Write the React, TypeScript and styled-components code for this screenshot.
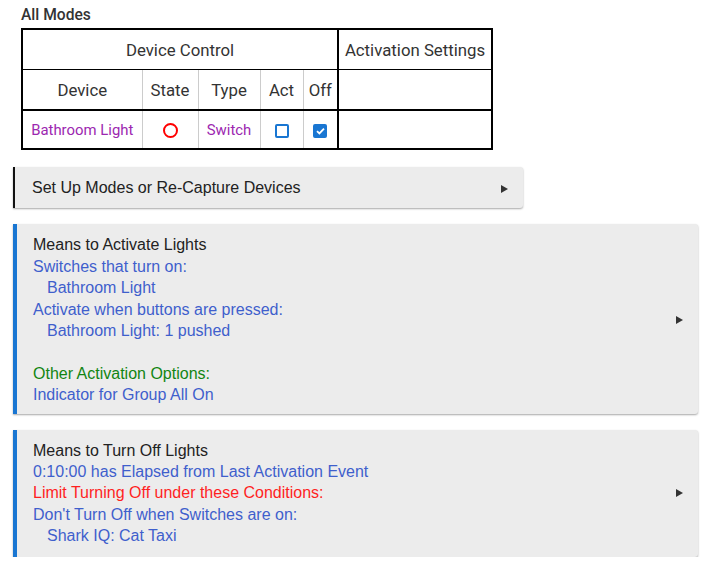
import styled, { createGlobalStyle } from "styled-components";

const GlobalStyle = createGlobalStyle`
    body {
        margin: 0;
        background: #ffffff;
        font-family: "Liberation Sans", Arial, sans-serif;
    }
`

const Page = styled.div`
    padding: 5px 16px 0 13px;
    display: flex;
    flex-direction: column;
`
const Heading = styled.div`
    font-family: Roboto, sans-serif;
    font-size: 15.6px;
    font-weight: 500;
    color: #333;
    margin-left: 8px;
    line-height: 21px;
    margin-bottom: 2px;
`
const Table = styled.table`
    border-collapse: collapse;
    table-layout: fixed;
    margin-left: 8px;
    font-family: Roboto, sans-serif;
    border: 2px solid #000;
    width: 472px;
`
const Th = styled.th<{ $last?: boolean; $group?: boolean }>`
    font-weight: 400;
    font-size: 16.8px;
    color: #333;
    height: 39px;
    padding: 0;
    white-space: nowrap;
    border-right: ${p => (p.$last ? "2px solid #000" : "1px solid #ccc")};
    border-bottom: ${p => (p.$group ? "1px solid #000" : "2px solid #000")};
`
const Td = styled.td<{ $last?: boolean; $purple?: boolean }>`
    font-size: 14.9px;
    color: ${p => (p.$purple ? "#9c27b0" : "#333")};
    text-align: center;
    white-space: nowrap;
    height: 37px;
    padding: 0;
    border-right: ${p => (p.$last ? "2px solid #000" : "1px solid #ccc")};
`
const StateRing = styled.span`
    display: inline-block;
    width: 11px;
    height: 11px;
    border: 2px solid #f00;
    border-radius: 50%;
    vertical-align: middle;
`
const Box = styled.span<{ $checked?: boolean }>`
    display: inline-flex;
    align-items: center;
    justify-content: center;
    box-sizing: border-box;
    width: 14px;
    height: 14px;
    border: 2px solid #1976d2;
    border-radius: 2px;
    background: ${p => (p.$checked ? "#1976d2" : "transparent")};
    vertical-align: middle;
`
const Card = styled.div<{ $accent: string; $width: number; $gap: number; $tail?: number }>`
    width: ${p => p.$width}px;
    box-sizing: border-box;
    background: #ececec;
    border-left: ${p => p.$accent};
    border-radius: 0 3px 3px 0;
    box-shadow: 0 1px 2px rgba(0, 0, 0, 0.35);
    display: flex;
    align-items: center;
    padding: 10px 15px ${p => p.$tail ?? 8}px 16px;
    margin-top: ${p => p.$gap}px;
    font-size: 16px;
    line-height: 21.4px;
`
const CardBody = styled.div`
    flex: 1;
    display: flex;
    flex-direction: column;
`
const Line = styled.div<{ $tone?: "title" | "blue" | "green" | "red"; $indent?: boolean }>`
    min-height: 21.4px;
    padding-left: ${p => (p.$indent ? "14px" : "0")};
    color: ${p =>
        p.$tone === "blue" ? "#3f5fcc" :
        p.$tone === "green" ? "#128512" :
        p.$tone === "red" ? "#ff1f1f" : "#222"};
`
const MenuLine = styled(Line)`
    padding-left: 1px;
    padding-bottom: 2px;
`
const Arrow = styled.span`
    width: 0;
    height: 0;
    border-top: 4px solid transparent;
    border-bottom: 4px solid transparent;
    border-left: 7px solid #333;
`

const Check = () => (
    <svg width="9" height="8" viewBox="0 0 9 8">
        <path d="M1 4.2 L3.4 6.4 L8 1.6" stroke="#fff" strokeWidth="1.8" fill="none" />
    </svg>
)

const App = () => {
    return (
        <>
        <GlobalStyle />
        <Page>
            <Heading>All Modes</Heading>
            <Table>
                <colgroup>
                    <col style={{ width: 120 }} />
                    <col style={{ width: 56 }} />
                    <col style={{ width: 62 }} />
                    <col style={{ width: 43 }} />
                    <col style={{ width: 35 }} />
                    <col />
                </colgroup>
                <thead>
                    <tr>
                        <Th colSpan={5} $group $last>Device Control</Th>
                        <Th $group>Activation Settings</Th>
                    </tr>
                    <tr>
                        <Th>Device</Th>
                        <Th>State</Th>
                        <Th>Type</Th>
                        <Th>Act</Th>
                        <Th $last>Off</Th>
                        <Th></Th>
                    </tr>
                </thead>
                <tbody>
                    <tr>
                        <Td $purple>Bathroom Light</Td>
                        <Td><StateRing /></Td>
                        <Td $purple>Switch</Td>
                        <Td><Box /></Td>
                        <Td $last><Box $checked><Check /></Box></Td>
                        <Td></Td>
                    </tr>
                </tbody>
            </Table>

            <Card $accent="2px solid #111" $width={510} $gap={17}>
                <CardBody>
                    <MenuLine>Set Up Modes or Re-Capture Devices</MenuLine>
                </CardBody>
                <Arrow />
            </Card>

            <Card $accent="4px solid #1976d2" $width={685} $gap={16}>
                <CardBody>
                    <Line $tone="title">Means to Activate Lights</Line>
                    <Line $tone="blue">Switches that turn on:</Line>
                    <Line $tone="blue" $indent>Bathroom Light</Line>
                    <Line $tone="blue">Activate when buttons are pressed:</Line>
                    <Line $tone="blue" $indent>Bathroom Light: 1 pushed</Line>
                    <Line />
                    <Line $tone="green">Other Activation Options:</Line>
                    <Line $tone="blue">Indicator for Group All On</Line>
                </CardBody>
                <Arrow />
            </Card>

            <Card $accent="4px solid #1976d2" $width={685} $gap={16} $tail={10}>
                <CardBody>
                    <Line $tone="title">Means to Turn Off Lights</Line>
                    <Line $tone="blue">0:10:00 has Elapsed from Last Activation Event</Line>
                    <Line $tone="red">Limit Turning Off under these Conditions:</Line>
                    <Line $tone="blue">Don't Turn Off when Switches are on:</Line>
                    <Line $tone="blue" $indent>Shark IQ: Cat Taxi</Line>
                </CardBody>
                <Arrow />
            </Card>
        </Page>
        </>
    )
}

export default App
